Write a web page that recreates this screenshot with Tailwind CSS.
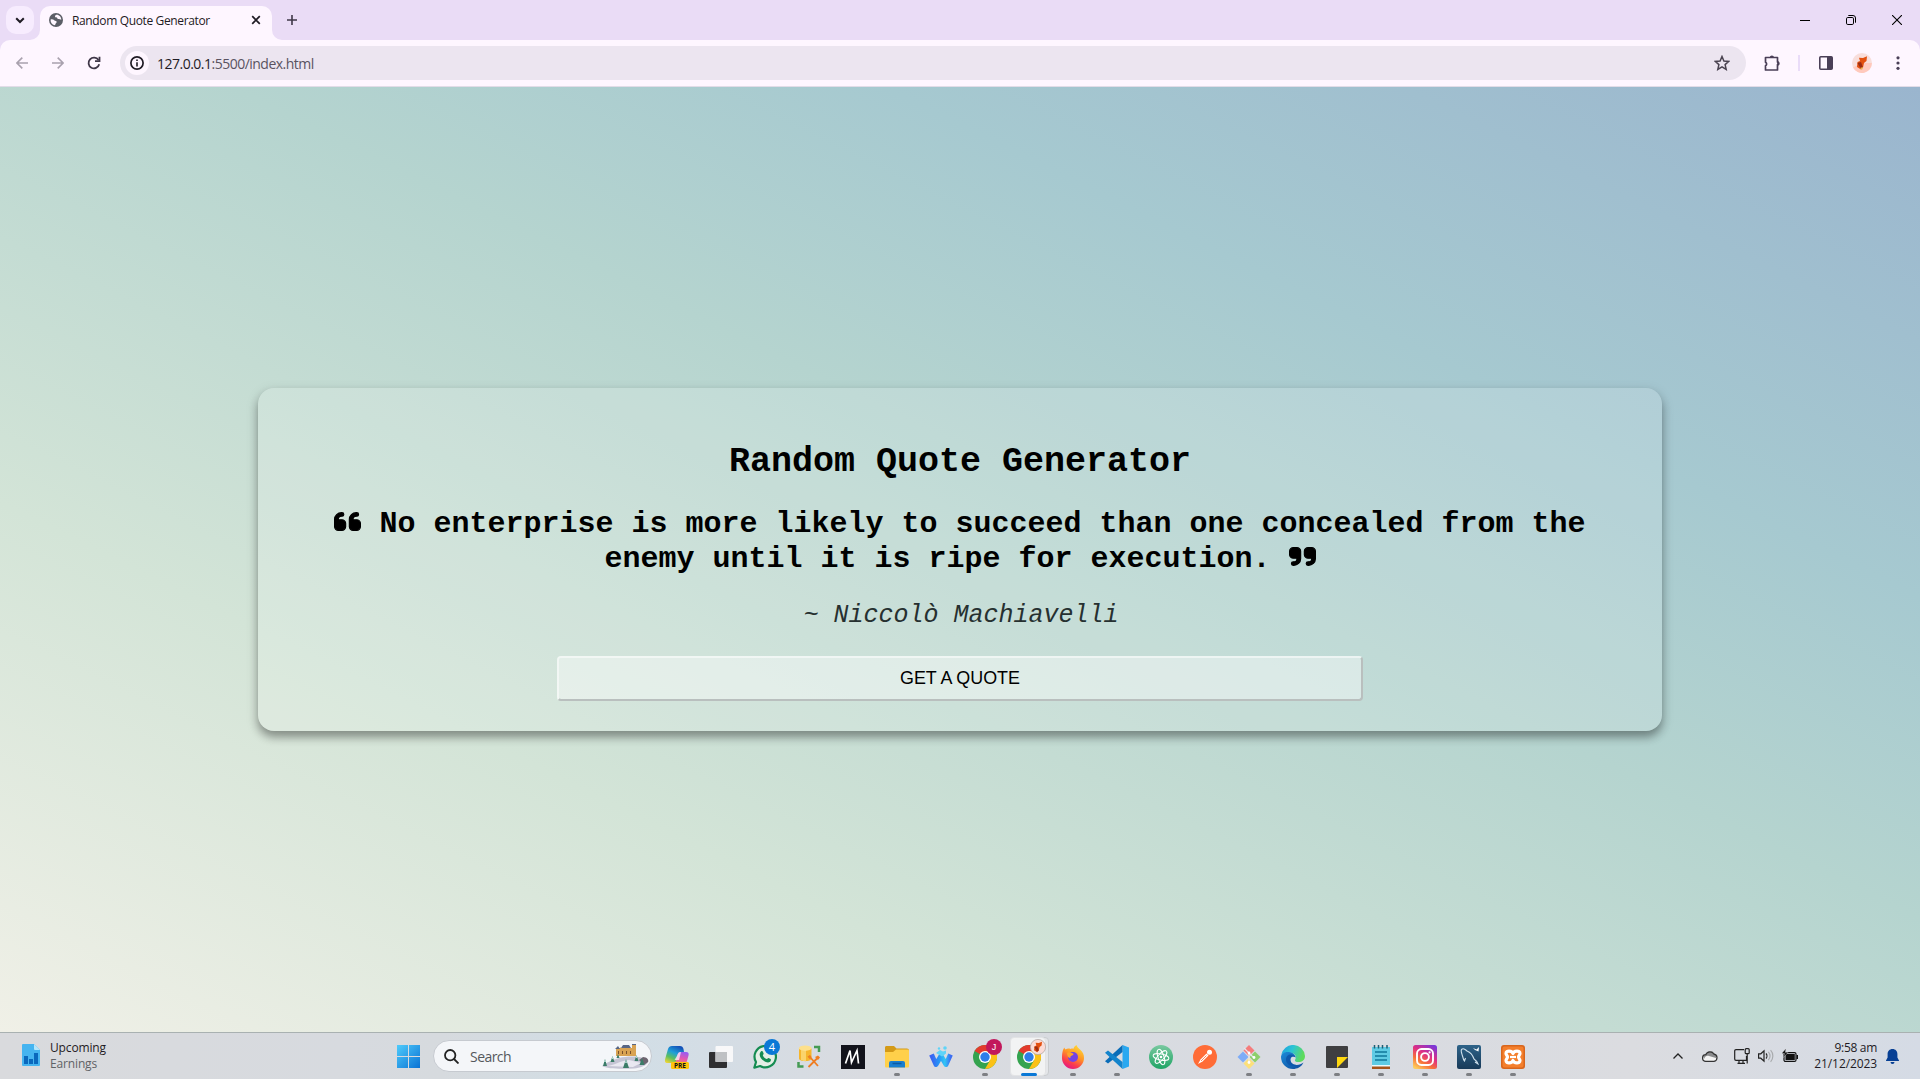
<!DOCTYPE html>
<html lang="en">
<head>
<meta charset="utf-8">
<title>Random Quote Generator</title>
<script src="https://cdn.jsdelivr.net/npm/@tailwindcss/browser@4"></script>
</head>
<body class="w-[1920px] h-[1079px] overflow-hidden flex flex-col font-['Open_Sans','Noto_Sans',sans-serif] text-[#1f1b24]">

<!-- Tab strip -->
<header class="h-10 shrink-0 bg-[#eadcf6] flex items-start">
  <button class="ml-1.5 mt-1.5 size-7 rounded-[10px] bg-[#f7ecfe] flex items-center justify-center">
    <svg class="size-3" viewBox="0 0 12 12" fill="none" stroke="#1f1b24" stroke-width="2"><path d="M2.2 4.2 6 8l3.800-3.800"/></svg>
  </button>
  <div class="relative ml-1.5 mt-1.5 w-[232px] h-[34px] rounded-t-[10px] bg-[#fef6ff] flex items-center">
    <svg class="absolute -left-2.5 bottom-0 size-2.5" viewBox="0 0 10 10"><path d="M10 0v10H0A10 10 0 0 0 10 0z" fill="#fef6ff"/></svg>
    <svg class="absolute -right-2.5 bottom-0 size-2.5" viewBox="0 0 10 10"><path d="M0 0v10h10A10 10 0 0 1 0 0z" fill="#fef6ff"/></svg>
    <svg class="ml-[9px] -mt-1.5 size-[14px]" viewBox="0 0 14 14"><circle cx="7" cy="7" r="7" fill="#5b5e66"/><path d="M1.600 6.500c1.500-.4 3 .1 3.900.9.800.700 1.900.4 2.200 1.300.3 1-.900 1.200-1.100 2.100-.1.700-.6 1.300-1 1.500C3 11.800 1.300 9.500 1.600 6.500zM7.300 1.700c-.9.500-1.700 1.100-1.200 2 .5.800 1.700.3 2 1.100.3.900.7 1.300 1.600 1.200.9 0 1.600.4 2.600.7.100-2.600-2-5.200-5-5z" fill="#fef6ff"/></svg>
    <span class="ml-[9px] -mt-[4px] text-[12px] tracking-[-0.36px] whitespace-nowrap w-[179px]">Random Quote Generator</span>
    <svg class="-mt-1.5 size-[10px]" viewBox="0 0 10 10" stroke="#1f1b24" stroke-width="1.700"><path d="m1.200 1.200 7.600 7.600m0-7.600L1.200 8.800"/></svg>
  </div>
  <svg class="ml-[15px] mt-[15px] size-[10px]" viewBox="0 0 10 10" stroke="#3f3748" stroke-width="1.600"><path d="M5 0v10M0 5h10"/></svg>
  <div class="ml-auto mt-[15px] mr-[18px] flex gap-9 text-black">
    <svg class="size-[10px]" viewBox="0 0 10 10" stroke="#000"><path d="M0 5.500h10"/></svg>
    <svg class="size-[10px]" viewBox="0 0 10 10" fill="none" stroke="#000"><rect x=".5" y="2.500" width="7" height="7" rx="1.300"/><path d="M2.300.500H7A2.500 2.500 0 0 1 9.500 3v4.700"/></svg>
    <svg class="size-[10px]" viewBox="0 0 10 10" stroke="#000" stroke-width="1.100"><path d="m0 0 10 10m0-10L0 10"/></svg>
  </div>
</header>

<!-- Toolbar -->
<div class="h-[47px] shrink-0 bg-[#eadcf6]">
  <div class="h-[47px] rounded-t-[10px] bg-[#fef6ff] border-b border-[#e2dce8] flex items-center">
    <svg class="ml-4 size-3" viewBox="0 0 12 12" fill="none" stroke="#a9a1ae" stroke-width="1.600"><path d="M12 6H1M6.300.600.900 6l5.400 5.400"/></svg>
    <svg class="ml-6 size-3" viewBox="0 0 12 12" fill="none" stroke="#a9a1ae" stroke-width="1.600"><path d="M0 6h11M5.700.600 11.100 6l-5.400 5.400"/></svg>
    <svg class="ml-[23px] size-[14px]" viewBox="0 0 14 14" fill="none" stroke="#3f3748" stroke-width="1.800"><path d="M12.200 8.300A5.400 5.400 0 1 1 11.500 4"/><path d="M8 5.200h4.500V.800"/></svg>
    <div class="ml-[19px] w-[1626px] h-[34px] rounded-full bg-[#ece5f0] flex items-center">
      <div class="ml-[5px] size-6 rounded-full bg-[#fef6ff] flex items-center justify-center">
        <svg class="size-[14px]" viewBox="0 0 14 14"><circle cx="7" cy="7" r="6.100" fill="none" stroke="#1f1b24" stroke-width="1.700"/><path d="M6.200 6.200h1.600v4.200H6.200zM6.200 3.500h1.600v1.600H6.200z" fill="#1f1b24"/></svg>
      </div>
      <span class="ml-[8px] text-[14px] tracking-[-0.51px] whitespace-nowrap">127.0.0.1<span class="text-[#5a5361]">:5500/index.html</span></span>
      <svg class="ml-auto mr-4 size-4" viewBox="0 0 16 16" fill="none" stroke="#4a4350" stroke-width="1.500"><path d="m8 1.500 1.900 4.500 4.900.400-3.700 3.200 1.100 4.800L8 11.900l-4.200 2.500 1.100-4.800L1.200 6.400 6.100 6z"/></svg>
    </div>
    <svg class="ml-[18px] size-[17px]" viewBox="0 0 17 17"><path d="M1.500 2.500h12v4.600h.6v2.400h-.6v5.500h-12v-4.200a2 2 0 0 0 0-3.600z" fill="none" stroke="#4a3f57" stroke-width="1.700" stroke-linejoin="round"/><path d="M5.800 2.500a2.100 2.100 0 0 1 4.200 0zM13.500 6.200a2.200 2.200 0 0 1 0 4.400z" fill="#4a3f57"/></svg>
    <div class="ml-[17px] w-0.5 h-4 bg-[#eadcf9]"></div>
    <svg class="ml-[19px] size-[14px]" viewBox="0 0 14 14"><rect x=".8" y=".8" width="12.400" height="12.400" rx="1" fill="none" stroke="#4a3f57" stroke-width="1.600"/><path d="M8 1h5v12H8z" fill="#4a3f57"/></svg>
    <svg class="ml-[19px] size-5" viewBox="0 0 20 20"><circle cx="10" cy="10" r="10" fill="#f8dedb"/><path d="M1 14.500 10 10h9.900a10 10 0 0 1-18.900 4.500z" fill="#ffc9bd"/><path d="M7 4.800 11 5l4-1.700-.5 4.700-2.500 2-1 4.500-2 2L5 14l.500-5 2.500-1z" fill="#e3500f"/><path d="m5.500 10 3.500-1 2 5.500-2.500 1z" fill="#9c2c12"/><path d="m8 15 3-1-1 3z" fill="#e9b44b"/></svg>
    <svg class="ml-6 w-1 h-[14px]" viewBox="0 0 4 14" fill="#4a3f57"><circle cx="2" cy="1.800" r="1.600"/><circle cx="2" cy="7" r="1.600"/><circle cx="2" cy="12.300" r="1.600"/></svg>
  </div>
</div>

<!-- Page -->
<main class="h-[945px] shrink-0 flex justify-center items-start pt-[301px] bg-[linear-gradient(to_right_top,#f0f0e7,#d3e4d7_28%,#b5d4cf_56%,#a6c9d0_73%,#9ab5ce)]">
  <section class="w-[1404px] h-[343px] rounded-2xl bg-white/15 shadow-[0_6px_9px_rgba(0,0,0,0.3),0_4px_14px_rgba(0,0,0,0.14)] flex flex-col items-center text-center text-black font-['Liberation_Mono','Courier_New',monospace]">
    <h1 class="mt-[54px] h-10 text-[35px] leading-10 font-bold">Random Quote Generator</h1>
    <h2 class="mt-[25px] h-[70px] text-[30px] leading-[35px] font-bold whitespace-nowrap">
      <svg class="inline-block align-baseline w-[27px] h-[19px] mb-px" viewBox="-10 84 468 344" preserveAspectRatio="none" stroke="#000" stroke-width="20"><path d="M0 216C0 149.700 53.700 96 120 96h8c17.700 0 32 14.300 32 32s-14.300 32-32 32h-8c-30.900 0-56 25.100-56 56v8h64c35.300 0 64 28.700 64 64v64c0 35.300-28.700 64-64 64H64c-35.300 0-64-28.700-64-64V216zm256 0c0-66.300 53.700-120 120-120h8c17.700 0 32 14.300 32 32s-14.300 32-32 32h-8c-30.900 0-56 25.100-56 56v8h64c35.300 0 64 28.700 64 64v64c0 35.300-28.700 64-64 64h-64c-35.300 0-64-28.700-64-64V216z"/></svg>
      No enterprise is more likely to succeed than one concealed from the<br>enemy until it is ripe for execution.
      <svg class="inline-block align-baseline w-[27px] h-[19px] mb-px" viewBox="-10 84 468 344" preserveAspectRatio="none" stroke="#000" stroke-width="20"><path d="M448 296c0 66.300-53.700 120-120 120h-8c-17.700 0-32-14.300-32-32s14.300-32 32-32h8c30.900 0 56-25.100 56-56v-8h-64c-35.300 0-64-28.700-64-64v-64c0-35.300 28.700-64 64-64h64c35.300 0 64 28.700 64 64v136zm-256 0c0 66.300-53.700 120-120 120h-8c-17.700 0-32-14.300-32-32s14.300-32 32-32h8c30.900 0 56-25.100 56-56v-8H64c-35.300 0-64-28.700-64-64v-64c0-35.300 28.700-64 64-64h64c35.300 0 64 28.700 64 64v136z"/></svg>
    </h2>
    <p class="mt-[25px] h-7 text-[25px] leading-7 italic text-[#263030] pl-0.5">~ Niccolò Machiavelli</p>
    <button class="mt-[26px] w-[806px] h-[45px] shrink-0 rounded border-2 border-t-white/70 border-l-white/70 border-b-[#b9bfbe] border-r-[#b9bfbe] bg-white/40 bg-clip-padding text-[17.9px] font-['Liberation_Sans',Arial,sans-serif]">GET A QUOTE</button>
  </section>
</main>

<!-- Taskbar -->
<footer class="relative h-[47px] shrink-0 border-t border-[#a9b1b1] bg-[linear-gradient(90deg,#d9dadd,#d7dadf_18%,#d6dade_23%,#d1dee6_32%,#d4dde5_37%,#d9dbe0_45%,#d8dbe1_70%,#dbdce0_85%,#d5dbe5)] flex items-start">
  <svg class="ml-[22px] mt-[11px] w-[18px] h-[22px]" viewBox="0 0 18 22"><path d="M1 0h11l6 6v15a1 1 0 0 1-1 1H1a1 1 0 0 1-1-1V1a1 1 0 0 1 1-1z" fill="#45b4f0"/><path d="m12 0 6 6h-5a1 1 0 0 1-1-1z" fill="#b5e6fb"/><path d="M2 12h4v8H2zM7 15h4v5H7zM12 9h4v11h-4z" fill="#0a68bd"/></svg>
  <div class="ml-2.5 mt-[7px] w-[336px] text-[12px] leading-4 tracking-[-0.15px]"><div>Upcoming</div><div class="text-[#5f6266]">Earnings</div></div>

  <div class="w-11 h-[46px] flex justify-center">
    <svg class="mt-3 size-[23px]" viewBox="0 0 23 23"><defs><linearGradient id="win" x2="1" y2="1" gradientUnits="objectBoundingBox"><stop stop-color="#4fcbfb"/><stop offset="1" stop-color="#0a72d4"/></linearGradient></defs><path fill="url(#win)" d="M0 0h11v11H0zM12 0h11v11H12zM0 12h11v11H0zM12 12h11v11H12z"/></svg>
  </div>
  <div class="ml-[3px] mt-[7px] w-[219px] h-[32px] rounded-full bg-[#f4f6f9] border border-[#c6cad0] flex items-center overflow-hidden">
    <svg class="ml-[10px] size-[15px]" viewBox="0 0 15 15" fill="none" stroke="#222" stroke-width="1.800"><circle cx="6.200" cy="6.200" r="5.200"/><path d="m10 10 4.500 4.500"/></svg>
    <span class="ml-[11px] text-[14px] tracking-[-0.55px] text-[#55585c]">Search</span>
    <svg class="ml-auto mr-[2px] w-[48px] h-[26px]" viewBox="0 0 48 26"><path d="M1 23c5-4 11-6 17-8 8-2 18-2 24 0 4 1 6 2 5 4-2 4-8 6-14 6.500C20 26 6 26 1 23z" fill="#c5c4d4"/><path d="M42 14c4 0 6 3 5 5l-4 3-5-5z" fill="#6d6570"/><path d="M6 23c9-1 12-5 22-6l12 3-8 4z" fill="#e9e8f1"/><path d="M15 5h4v-1l1 1h11V1h4v12H15z" fill="#d9a353"/><path d="M14 6l3-3 2 3zM20 5l2-3h6l2 3zM31 1h4v1h-4z" fill="#586684"/><path d="M17 8h1v3h-1zM21 8h1v3h-1zM25 8h1v3h-1zM29 8h1v3h-1z" fill="#79512b"/><g fill="#3b7c68"><path d="M4 16l2 7H2zM11.500 13l2 6h-4zM25 16l3 9h-6zM35.500 12l2 6h-4zM41 15l2.500 7h-5zM17 11l1.500 4h-3z"/></g><path d="M4 16l1 3H3zM25 16l1 4h-2zM35.500 12l.8 3h-1.600zM11.500 13l.8 3h-1.600z" fill="#b3dbd4"/></svg>
  </div>

  <nav class="ml-[3px] flex h-[46px]">
    <!-- Copilot -->
    <div class="w-11 flex justify-center"><svg class="mt-3 size-6" viewBox="0 0 24 24"><defs><linearGradient id="c1" x1=".7" x2=".2" y2="1"><stop stop-color="#1450b8"/><stop offset=".4" stop-color="#1d9fd8"/><stop offset=".7" stop-color="#5bbf5f"/><stop offset="1" stop-color="#e8d437"/></linearGradient><linearGradient id="c2" x1=".6" x2=".3" y2="1"><stop stop-color="#9a5cf0"/><stop offset=".5" stop-color="#e358ae"/><stop offset="1" stop-color="#f9876a"/></linearGradient></defs><path d="M7 1h8c2 0 3 1 3.500 3l.5 3h-3c-2 0-3 1-3.500 3l-1 5c-.5 2-1 3-3 3H3c-2.500 0-3.500-1-3-3.500L3 4c.6-2 2-3 4-3z" fill="url(#c1)"/><path d="M16 7h5c2.500 0 3 1.500 2.500 3.500L22 16c-.6 2-1.500 3-3.500 3H7c2.500 0 3.500-1 4-3l1.500-6c.5-2 1.500-3 3.500-3z" fill="url(#c2)"/><path d="M12.500 10c.5-2 1.500-3 3.500-3L14 15H9.500z" fill="#fff" opacity=".7"/><rect x="6" y="17" width="18" height="7" rx="1.500" fill="#ffc30b"/><text x="15" y="23" font-size="6.500" font-weight="bold" text-anchor="middle" fill="#111">PRE</text></svg></div>
    <!-- Task view -->
    <div class="w-11 flex justify-center"><svg class="mt-3 size-6" viewBox="0 0 24 24"><rect y="7" width="18" height="16" rx="1" fill="#2f2f31"/><rect x="6.500" y="1" width="17.500" height="16" rx="1" fill="#f8f8f9"/><path d="M6.500 7H18v10H6.500z" fill="#bfc1c4"/></svg></div>
    <!-- WhatsApp -->
    <div class="relative w-11 flex justify-center"><svg class="mt-3 size-6" viewBox="0 0 24 24"><path d="M1.300 22.700 3 17A10.700 10.700 0 1 1 7.100 21z" fill="#e4efe6" stroke="#158c52" stroke-width="2.200" stroke-linejoin="round"/><path d="M8.200 6.300c.5-.5 1.300-.4 1.600.3l.8 1.900c.3.700-.8 1.400-.7 1.900.7 1.600 2.100 2.900 3.800 3.600.5.100 1.200-1.300 1.900-1l2 1c.7.400.2 2.500-.9 3.100-1.800 1-4 .1-6-1.300-2-1.500-4.400-4.300-4-6.700.1-1 .8-2.100 1.500-2.800z" fill="#158c52"/></svg>
      <span class="absolute left-[21px] top-[6px] size-[16px] rounded-full bg-[#0a78d6] text-white text-[11px] leading-[16px] text-center">4</span></div>
    <!-- Database tools -->
    <div class="w-11 flex justify-center"><svg class="mt-3 size-6" viewBox="0 0 24 24"><path d="M2 3.500v10c0 3.500 12.500 3.500 12.500 0v-10z" fill="#f6b52c"/><path d="M4 4v11c2 1 3 1 5 1V4z" fill="#fad36b"/><ellipse cx="8.200" cy="3.200" rx="6.300" ry="2.700" fill="#fde08c"/><path d="M17 2h5v5M6.500 21.500H1.500V17" fill="none" stroke="#459b54" stroke-width="2.500"/><path d="m12 11 9 10m-9.500 1 10-10" stroke="#ef7d22" stroke-width="1.800"/><path d="M10.500 11.500 13 10l1.500 2-2 2zM18 12l3-1.500 2 2-2 2.500z" fill="#ef7d22"/></svg></div>
    <!-- M -->
    <div class="w-11 flex justify-center"><svg class="mt-3 size-6" viewBox="0 0 24 24"><path fill="#12131b" d="M0 0h24v24H0z"/><path d="m4.500 18.500 4.500-13 1.500 12 5.500-12 1.500 13" fill="none" stroke="#fff" stroke-width="1.700"/></svg></div>
    <!-- Explorer -->
    <div class="w-11 flex flex-col items-center"><svg class="mt-3 size-6" viewBox="0 0 24 24"><path d="M0 2.500C0 1.600.6 1 1.500 1H9l2.500 2.500H22c1 0 2 .700 2 2V9H0z" fill="#d49a17"/><path d="M0 7h8l3-2.500h11.500c1 0 1.500.5 1.500 1.500v15c0 1-.5 1.500-1.500 1.500h-21C.500 22.500 0 22 0 21z" fill="#ffd04a"/><path d="M4 22.500V18a2 2 0 0 1 2-2h12a2 2 0 0 1 2 2v4.500z" fill="#1a7fd0"/><path d="M7.500 18.500h9" stroke="#0d5aa0" stroke-width="1.500"/></svg><i class="mt-1 w-1.5 h-[3px] rounded-full bg-[#7d7f83]"></i></div>
    <!-- W -->
    <div class="w-11 flex justify-center"><svg class="mt-3 size-6" viewBox="0 0 24 24"><defs><linearGradient id="w1" x2="1"><stop stop-color="#3a62f2"/><stop offset=".4" stop-color="#2597f5"/><stop offset=".7" stop-color="#33c5f5"/><stop offset="1" stop-color="#3c6ff2"/></linearGradient></defs><path d="M2.500 9.500 7 19.500l5-8.500 5 8.500 4.500-10" fill="none" stroke="url(#w1)" stroke-width="5" stroke-linejoin="round"/><path d="M7 8 11 5l3 1.500 3-1v3l-4 3z" fill="#5fd4f8"/><circle cx="16" cy="3" r="1.800" fill="#5fd4f8"/><circle cx="10" cy="3.500" r="1.200" fill="#5fd4f8"/></svg></div>
    <!-- Chrome, first profile -->
    <div class="relative w-11 flex flex-col items-center"><svg class="mt-3 size-6" viewBox="0 0 24 24"><circle cx="12" cy="12" r="12" fill="#34a34f"/><path d="M12 12 1.600 6A12 12 0 0 1 22.400 6z" fill="#e33b2e"/><path d="M22.400 6A12 12 0 0 1 12 24l5.200-9L12 6z" fill="#fbc116"/><circle cx="12" cy="12" r="6" fill="#fff"/><circle cx="12" cy="12" r="4.700" fill="#2f7de9"/></svg>
      <span class="absolute left-[23px] top-[6px] size-4 rounded-full bg-[#c2185b] text-white text-[9px] leading-4 text-center font-['Liberation_Sans',sans-serif]">J</span><i class="mt-1 w-1.5 h-[3px] rounded-full bg-[#7d7f83]"></i></div>
    <!-- Chrome, active -->
    <div class="relative w-11 flex flex-col items-center">
      <div class="absolute left-[4px] top-[4px] w-[38px] h-[39px] rounded bg-[#e4e6e9] border border-[#c9cccf]"></div>
      <div class="absolute left-[3px] top-[4px] w-[36px] h-[39px] rounded bg-[#f2f3f4] border border-[#e2e3e5]"></div>
      <svg class="relative mt-3 size-6" viewBox="0 0 24 24"><circle cx="12" cy="12" r="12" fill="#34a34f"/><path d="M12 12 1.600 6A12 12 0 0 1 22.400 6z" fill="#e33b2e"/><path d="M22.400 6A12 12 0 0 1 12 24l5.200-9L12 6z" fill="#fbc116"/><circle cx="12" cy="12" r="6" fill="#fff"/><circle cx="12" cy="12" r="4.700" fill="#2f7de9"/></svg>
      <svg class="absolute left-[23px] top-[6px] size-4" viewBox="0 0 20 20"><circle cx="10" cy="10" r="9.500" fill="#fbdcd6" stroke="#b5a9a7"/><path d="M7 4.800 11 5l4-1.700-.5 4.700-2.500 2-1 4.500-2 2L5 14l.500-5 2.500-1z" fill="#e3500f"/><path d="m5.500 10 3.500-1 2 5.500-2.500 1z" fill="#9c2c12"/></svg>
      <i class="relative mt-1 w-4 h-[3px] rounded-full bg-[#0a78d6]"></i></div>
    <!-- Firefox -->
    <div class="w-11 flex flex-col items-center"><svg class="mt-3 size-6" viewBox="0 0 24 24"><defs><linearGradient id="ff" x1=".8" x2=".3" y2="1"><stop stop-color="#ffe03a"/><stop offset=".45" stop-color="#ff9425"/><stop offset=".75" stop-color="#fb3f4c"/><stop offset="1" stop-color="#e31587"/></linearGradient></defs><path d="M2 5c.5-1 1-2 1.500-2.500C3.600 3.500 4 4 4.500 4.500 6 3.500 8 3.300 9.500 4c1-.5 2-.5 3-.3C13 2 14 1 15.500 0c.5 2 2 3 3.500 4.500 3 2.500 4 5 4 8.500a11 11 0 0 1-22 0c0-3 .2-5.500 1-8z" fill="url(#ff)"/><circle cx="12" cy="12" r="5" fill="#7542e5"/><path d="M6 8c2-1.500 4 0 6 .5 1 .3.500 1.500-1 2-1.500.500-2 1-1.500 2.500-2 0-3.500-2-3.500-5z" fill="#ffa22b"/></svg><i class="mt-1 w-1.5 h-[3px] rounded-full bg-[#7d7f83]"></i></div>
    <!-- VS Code -->
    <div class="w-11 flex flex-col items-center"><svg class="mt-3 size-6" viewBox="0 0 24 24"><path d="M17.500 0 24 2.500v19L17.500 24z" fill="#29a8f0"/><path d="M17.500 0v7L3 18.500 0 16.300z" fill="#0a6db8"/><path d="M17.500 24v-7L3 5.500 0 7.700z" fill="#1384cc"/></svg><i class="mt-1 w-1.5 h-[3px] rounded-full bg-[#7d7f83]"></i></div>
    <!-- Atom -->
    <div class="w-11 flex justify-center"><svg class="mt-3 size-6" viewBox="0 0 24 24"><defs><linearGradient id="at" x2="0" y2="1"><stop stop-color="#79c9a0"/><stop offset="1" stop-color="#1fa565"/></linearGradient></defs><circle cx="12" cy="12" r="12" fill="url(#at)"/><g fill="none" stroke="#fff" stroke-width="1"><ellipse cx="12" cy="12" rx="8" ry="3" transform="rotate(12 12 12)"/><ellipse cx="12" cy="12" rx="8" ry="3" transform="rotate(72 12 12)"/><ellipse cx="12" cy="12" rx="8" ry="3" transform="rotate(132 12 12)"/></g><circle cx="12" cy="12" r="1.300" fill="#fff"/></svg></div>
    <!-- Postman -->
    <div class="w-11 flex justify-center"><svg class="mt-3 size-6" viewBox="0 0 24 24"><circle cx="12" cy="12" r="12" fill="#ff6c37"/><path d="m5 19 2.500-4.500 6-6 2 2-6 6z" fill="#fff"/><circle cx="16.500" cy="7.200" r="2.500" fill="#fff"/><path d="m8 16 5.500-5.500" stroke="#ff6c37" stroke-width=".8"/></svg></div>
    <!-- Git -->
    <div class="w-11 flex flex-col items-center"><svg class="mt-3 size-6" viewBox="0 0 24 24"><path d="m12 0 5.500 5.500L12 11 6.500 5.500z" fill="#f57c7c"/><path d="m6 6.500 5.500 5.500L6 17.500.500 12z" fill="#7eacf7"/><path d="m18 6.500 5.500 5.500-5.500 5.500-5.500-5.500z" fill="#8dcf6c"/><path d="m12 13 5.500 5.500L12 24l-5.500-5.500z" fill="#fce07a"/><path d="m7 3 5 5v10m0-10 5 5" fill="none" stroke="#e7e8ec" stroke-width="1.200"/><circle cx="12" cy="17.500" r="1.400" fill="#fff"/><circle cx="17" cy="12.500" r="1.400" fill="#fff"/><circle cx="12" cy="8" r="1.400" fill="#fff"/></svg><i class="mt-1 w-1.5 h-[3px] rounded-full bg-[#7d7f83]"></i></div>
    <!-- Edge -->
    <div class="w-11 flex flex-col items-center"><svg class="mt-3 size-6" viewBox="0 0 24 24"><defs><linearGradient id="e1" x2="1" y2=".3"><stop stop-color="#1a9de0"/><stop offset=".5" stop-color="#2cc4d4"/><stop offset="1" stop-color="#5edb5c"/></linearGradient><linearGradient id="e2" x2="1" y2="1"><stop stop-color="#1b8ad8"/><stop offset="1" stop-color="#0c4a9c"/></linearGradient></defs><path d="M.200 10A12 12 0 0 1 24 11c0 4-3 6-6.500 6-2.500 0-4-1-3.500-2 1.500-2 1-6-3-7C6 7 1.500 8 .200 10z" fill="url(#e1)"/><path d="M0 12c0-3.500 4-5.500 8-5 4 .300 6.500 3 6.500 5.500-1-1.200-4-1.500-5 1-1 3 2 6.500 6 6.500 3 0 5-1 7-2.500C20.500 22 16 24 12 24A12 12 0 0 1 0 12z" fill="url(#e2)"/><path d="M9.500 13.500c-1 3 2 6.500 6 6.500-4 2.500-10.500 0-10.500-5.500C5 11 8 9 10.500 9.500c2 .300 4 1.500 4 3-1-1.200-4-1.500-5 1z" fill="#0d59ad"/></svg><i class="mt-1 w-1.5 h-[3px] rounded-full bg-[#7d7f83]"></i></div>
    <!-- Sticky notes -->
    <div class="w-11 flex flex-col items-center"><svg class="mt-3 size-6" viewBox="0 0 24 24"><path d="M1 2a1 1 0 0 1 1-1h20a1 1 0 0 1 1 1v20a1 1 0 0 1-1 1H2a1 1 0 0 1-1-1z" fill="#3f3f41"/><path d="M12 12h11L12 23z" fill="#ffd80f"/></svg><i class="mt-1 w-1.5 h-[3px] rounded-full bg-[#7d7f83]"></i></div>
    <!-- Notepad -->
    <div class="w-11 flex flex-col items-center"><svg class="mt-3 size-6" viewBox="0 0 24 24"><path d="M3 2h18v19H3z" fill="#5fcbe4"/><path d="M3 21h18v3H3z" fill="#a5551c"/><path d="M3 20h18v1.500H3z" fill="#eafafd"/><path d="M5.500 0v3.500M9.500 0v3.500M13.500 0v3.500M18 0v3.500" stroke="#1f5e73" stroke-width="1.500"/><path d="M6 7h12M6 11h12M6 15h12" stroke="#11789a" stroke-width="1.500"/></svg><i class="mt-1 w-1.5 h-[3px] rounded-full bg-[#7d7f83]"></i></div>
    <!-- Instagram -->
    <div class="w-11 flex flex-col items-center"><svg class="mt-3 size-6" viewBox="0 0 24 24"><defs><linearGradient id="ig" x1=".2" x2=".8" y1="1" y2="0"><stop stop-color="#fecb5c"/><stop offset=".3" stop-color="#f77038"/><stop offset=".6" stop-color="#df2e83"/><stop offset="1" stop-color="#7a37d8"/></linearGradient></defs><rect width="24" height="24" rx="2.500" fill="url(#ig)"/><g fill="none" stroke="#fff" stroke-width="1.900"><rect x="4" y="4" width="16" height="16" rx="4.500"/><circle cx="12" cy="12" r="3.900"/></g><circle cx="16.600" cy="7.400" r="1.100" fill="#fff"/></svg><i class="mt-1 w-1.5 h-[3px] rounded-full bg-[#7d7f83]"></i></div>
    <!-- MySQL -->
    <div class="w-11 flex flex-col items-center"><svg class="mt-3 size-6" viewBox="0 0 24 24"><defs><linearGradient id="my" x2="0" y2="1"><stop stop-color="#2e6389"/><stop offset="1" stop-color="#183a59"/></linearGradient></defs><rect width="24" height="24" rx="2" fill="url(#my)"/><path d="m8.500 13-1 3c-1-1-1.500-3-2-5C5 9 3.500 6 4.500 4.500 6 3 8 4 10 6c4 1.500 6 5 7 8 1.500 1 3 2 4 5l-3-2" fill="none" stroke="#cfe0ec" stroke-width="1.100"/><path d="m16 3 3.500 1.500L22 2l-.5 4.500L18 5z" fill="#fff"/></svg><i class="mt-1 w-1.5 h-[3px] rounded-full bg-[#7d7f83]"></i></div>
    <!-- XAMPP -->
    <div class="w-11 flex flex-col items-center"><svg class="mt-3 size-6" viewBox="0 0 24 24"><rect width="24" height="24" rx="3" fill="#d9661c"/><rect x="1.500" y="1.500" width="21" height="21" rx="2" fill="#f47f2c"/><path d="M12 8.500C11 5.500 5 5 5 8.500c0 1.500 1.500 2 1.500 3.500S5 14 5 15.500c0 3.500 6 3 7 0 1 3 7 3.500 7 0 0-1.500-1.500-2-1.500-3.500s1.500-2 1.500-3.500c0-3.500-6-3-7 0z" fill="none" stroke="#fff" stroke-width="3.200" stroke-linejoin="round"/><path d="M9 12h6" stroke="#fff" stroke-width="2.200"/></svg><i class="mt-1 w-1.5 h-[3px] rounded-full bg-[#7d7f83]"></i></div>
  </nav>

  <!-- Tray -->
  <div class="ml-auto flex h-[46px] items-center">
    <svg class="w-[10px] h-[6px]" viewBox="0 0 10 6" fill="none" stroke="#222" stroke-width="1.300"><path d="M.500 5.500 5 1l4.500 4.500"/></svg>
    <svg class="ml-[19px] w-4 h-3" viewBox="0 0 16 12"><path d="M4 11.300a3.300 3.300 0 0 1-.3-6.600 4.600 4.600 0 0 1 8.300-.5A3.600 3.600 0 0 1 12 11.300z" fill="#f4f4f4"/><path d="M2 9C3 6 5 5 7 6l7 2V5L10 1 6 2 4 4 1 6z" fill="#8b8c8e"/><path d="M4 11.300a3.300 3.300 0 0 1-.3-6.600 4.600 4.600 0 0 1 8.300-.5A3.600 3.600 0 0 1 12 11.300z" fill="none" stroke="#333" stroke-width="1.200"/></svg>
    <svg class="ml-4 size-4" viewBox="0 0 16 16" fill="none" stroke="#222" stroke-width="1.200"><path d="M10 1.600H2A1.300 1.300 0 0 0 .7 3v8c0 .7.500 1.300 1.300 1.300h10.500V8M5 12.500V15m4-2.500V15M3.500 15.300h7.500"/><rect x="11.200" y=".7" width="4" height="5" rx="1"/><path d="M13.200 6v9.500"/></svg>
    <svg class="ml-2 w-4 h-[14px]" viewBox="0 0 16 14" fill="none" stroke="#222" stroke-width="1.200"><path d="M.6 4.800h2.200L6 1.800v10.400L2.800 9.200H.6z"/><path d="M8 4.500c1.200 1.300 1.200 3.700 0 5"/><path d="M10.300 2.800c2.300 2.400 2.300 6 0 8.400M12.600 1.200c3 3.300 3 8.300 0 11.600" stroke="#a9abae"/></svg>
    <svg class="ml-2 w-4 h-[14px]" viewBox="0 0 16 14"><rect x="2" y="3.600" width="12" height="8.800" rx="1.500" fill="none" stroke="#111" stroke-width="1.200"/><path d="M3.500 5h9.300v6H3.500zM14.500 6H16v4h-1.500z" fill="#111"/><path d="M4-.5-.5 4.500h3L1.500 8.500 6 3.500H3.300z" fill="#111" stroke="#dbdde1" stroke-width=".4"/></svg>
    <div class="ml-[13px] w-[66px] text-right text-[12px] leading-4 whitespace-nowrap"><div class="tracking-[-0.3px]">9:58 am</div><div class="tracking-[-0.1px]">21/12/2023</div></div>
    <svg class="ml-[9px] mr-[21px] w-[13px] h-[15px]" viewBox="0 0 13 15" fill="#073f94"><path d="M6.500 0C3.500 0 1.600 2.200 1.600 5v3.500L0 11.500V12h13v-.5l-1.600-3V5c0-2.800-1.900-5-4.900-5zM4.500 13h4a2 2 0 0 1-4 0z"/></svg>
  </div>
</footer>
</body>
</html>
